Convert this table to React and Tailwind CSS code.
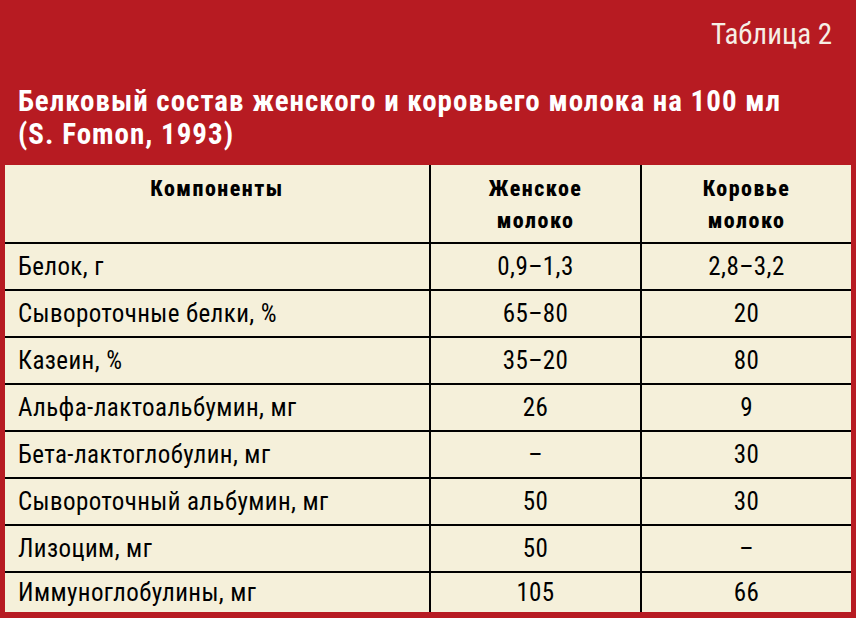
import React from 'react';

const rows = [
  ['Белок, г', '0,9–1,3', '2,8–3,2'],
  ['Сывороточные белки, %', '65–80', '20'],
  ['Казеин, %', '35–20', '80'],
  ['Альфа-лактоальбумин, мг', '26', '9'],
  ['Бета-лактоглобулин, мг', '–', '30'],
  ['Сывороточный альбумин, мг', '50', '30'],
  ['Лизоцим, мг', '50', '–'],
  ['Иммуноглобулины, мг', '105', '66'],
];

const font = { fontFamily: '"Roboto Condensed", Roboto, sans-serif' };

const App = () => {
  return (
    <div className="w-[856px] h-[618px] bg-[#b71b22] flex flex-col overflow-hidden" style={font}>
      {/* Header */}
      <div className="h-[165px] flex flex-col px-[18px]">
        <div className="text-right text-[#f6efe6] text-[29px] leading-none pt-[20px] pr-[6px] font-normal">Таблица 2</div>
        <div className="mt-[36px] text-white font-bold text-[29px] tracking-[1px] leading-[33px]">
          Белковый состав женского и коровьего молока на 100 мл
          <br />
          (S. Fomon, 1993)
        </div>
      </div>

      {/* Table */}
      <div className="mx-[5px] bg-[#f5f0da]">
        <table className="w-full border-collapse text-black">
          <thead>
            <tr className="h-[78px]">
              <th className="w-[425px] border-2 border-black border-t-0 border-l-0 align-top pt-[8px] text-[22px] font-extrabold tracking-[1.5px] leading-[32px]">
                Компоненты
              </th>
              <th className="w-[211px] border-2 border-black border-t-0 align-top pt-[8px] text-[22px] font-extrabold tracking-[1.5px] leading-[32px]">
                Женское<br />молоко
              </th>
              <th className="border-2 border-black border-t-0 border-r-0 align-top pt-[8px] text-[22px] font-extrabold tracking-[1.5px] leading-[32px]">
                Коровье<br />молоко
              </th>
            </tr>
          </thead>
          <tbody>
            {rows.map((r, i) => (
              <tr key={i} className={i === rows.length - 1 ? 'h-[40px]' : 'h-[47px]'}>
                <td className={`border-2 border-black border-l-0 px-[13px] text-[25px] tracking-[0.4px] ${i === rows.length - 1 ? 'border-b-0' : ''}`}>{r[0]}</td>
                <td className={`border-2 border-black text-center text-[25px] tracking-[0.4px] ${i === rows.length - 1 ? 'border-b-0' : ''}`}>{r[1]}</td>
                <td className={`border-2 border-black border-r-0 text-center text-[25px] tracking-[0.4px] ${i === rows.length - 1 ? 'border-b-0' : ''}`}>{r[2]}</td>
              </tr>
            ))}
          </tbody>
        </table>
      </div>
    </div>
  );
};

export default App;
